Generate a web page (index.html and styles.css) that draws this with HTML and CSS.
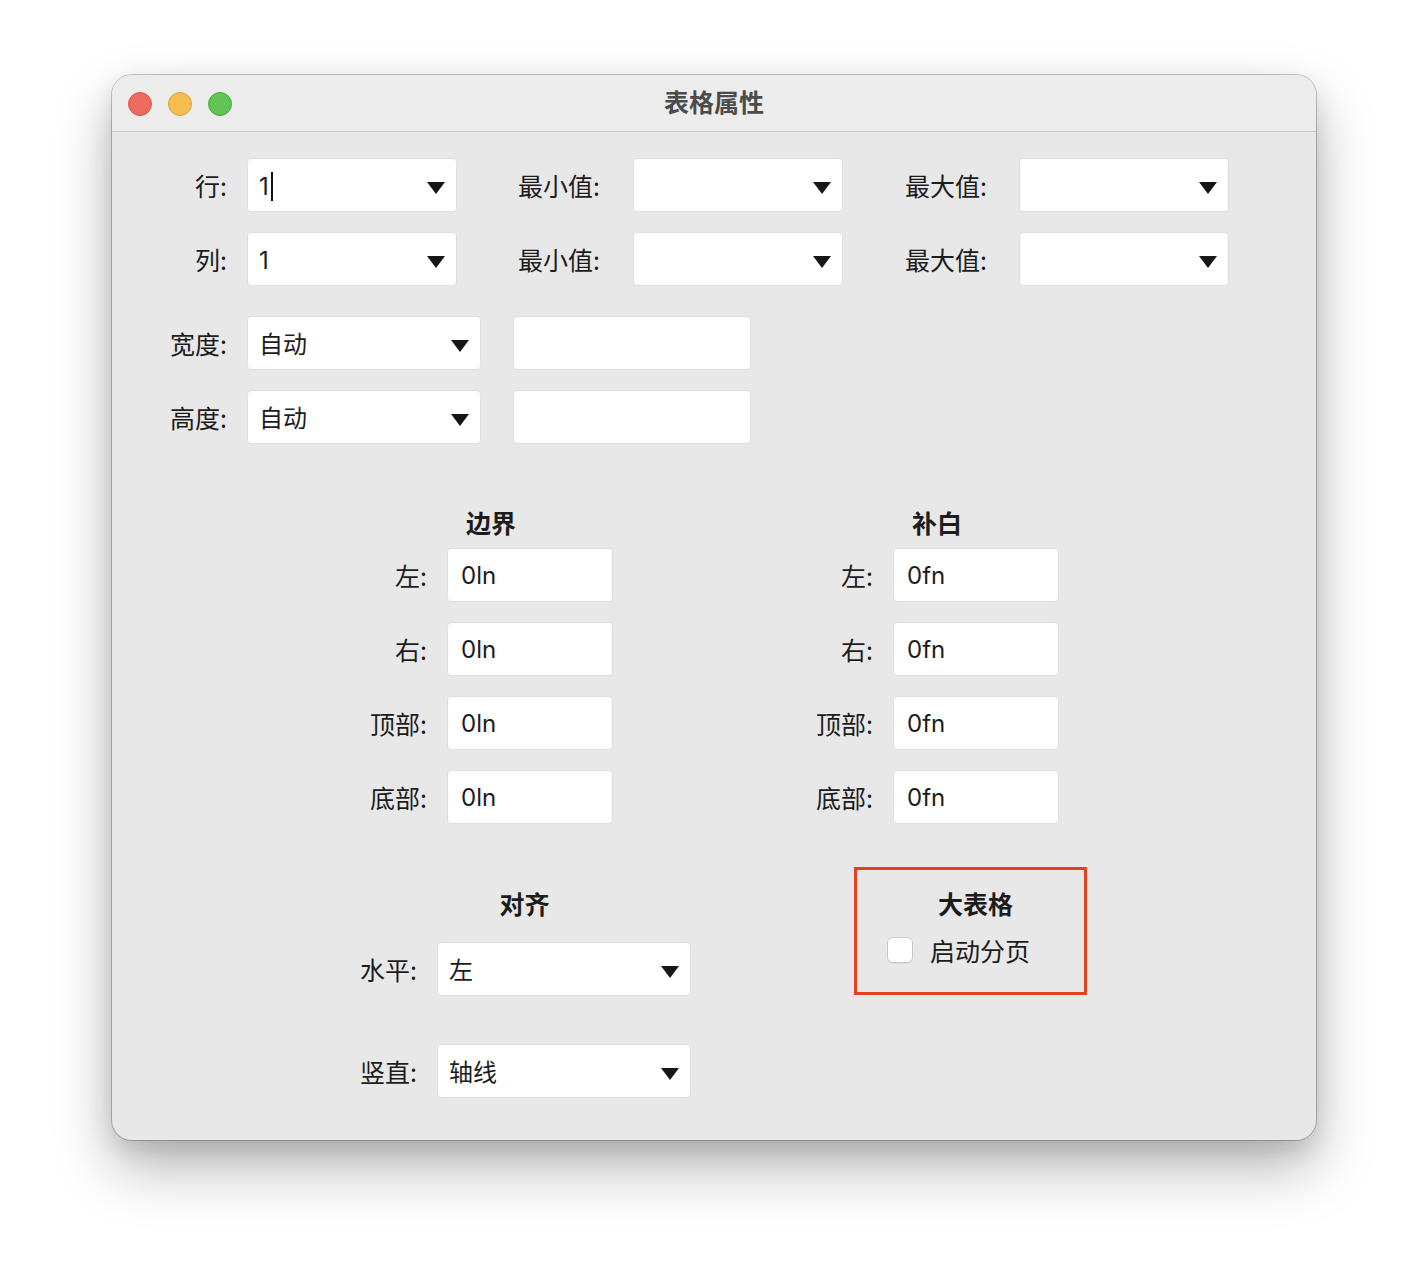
FILE: index.html
```html
<!DOCTYPE html>
<html lang="zh">
<head>
<meta charset="utf-8">
<title>表格属性</title>
<link rel="stylesheet" href="styles.css">
</head>
<body>
<div class="window">
  <div class="titlebar">
    <div class="lights">
      <span class="light red"></span>
      <span class="light yellow"></span>
      <span class="light green"></span>
    </div>
    <div class="title">表格属性</div>
  </div>
  <div class="content">
    <div class="rows">
      <div class="row">
        <div class="lbl1">行:</div>
        <div class="combo w210"><span class="val">1<span class="caret"></span></span><span class="arrow"></span></div>
        <div class="lbl2">最小值:</div>
        <div class="combo w210"><span class="val"></span><span class="arrow"></span></div>
        <div class="lbl3">最大值:</div>
        <div class="combo w210"><span class="val"></span><span class="arrow"></span></div>
      </div>
      <div class="row">
        <div class="lbl1">列:</div>
        <div class="combo w210"><span class="val">1</span><span class="arrow"></span></div>
        <div class="lbl2">最小值:</div>
        <div class="combo w210"><span class="val"></span><span class="arrow"></span></div>
        <div class="lbl3">最大值:</div>
        <div class="combo w210"><span class="val"></span><span class="arrow"></span></div>
      </div>
    </div>
    <div class="rows size-rows">
      <div class="row">
        <div class="lbl1">宽度:</div>
        <div class="combo w234"><span class="val">自动</span><span class="arrow"></span></div>
        <div class="field w238"></div>
      </div>
      <div class="row">
        <div class="lbl1">高度:</div>
        <div class="combo w234"><span class="val">自动</span><span class="arrow"></span></div>
        <div class="field w238"></div>
      </div>
    </div>
    <div class="sections">
      <div class="group margins">
        <div class="ghead">边界</div>
        <div class="glbl">左:</div><div class="field w166">0ln</div>
        <div class="glbl">右:</div><div class="field w166">0ln</div>
        <div class="glbl">顶部:</div><div class="field w166">0ln</div>
        <div class="glbl">底部:</div><div class="field w166">0ln</div>
      </div>
      <div class="group paddings">
        <div class="ghead">补白</div>
        <div class="glbl">左:</div><div class="field w166">0fn</div>
        <div class="glbl">右:</div><div class="field w166">0fn</div>
        <div class="glbl">顶部:</div><div class="field w166">0fn</div>
        <div class="glbl">底部:</div><div class="field w166">0fn</div>
      </div>
    </div>
    <div class="sections2">
      <div class="group align">
        <div class="ghead">对齐</div>
        <div class="glbl">水平:</div><div class="combo w254"><span class="val">左</span><span class="arrow"></span></div>
        <div class="glbl">竖直:</div><div class="combo w254"><span class="val">轴线</span><span class="arrow"></span></div>
      </div>
      <div class="bigtable">
        <div class="bhead">大表格</div>
        <label class="check"><span class="box"></span><span>启动分页</span></label>
      </div>
    </div>
  </div>
</div>
</body>
</html>
```
FILE: styles.css
```css
* { box-sizing: border-box; }
html, body { margin: 0; padding: 0; background: #ffffff; }
body {
  width: 1428px;
  height: 1288px;
  overflow: hidden;
  font-family: "Inter", "Noto Sans CJK SC", sans-serif;
  color: #1c1c1c;
  font-size: 24px;
}
.window {
  position: relative;
  margin-left: 112px;
  margin-top: 75px;
  width: 1204px;
  height: 1065px;
  border-radius: 20px;
  background: #e8e8e8;
  box-shadow: 0 0 0 1px rgba(0,0,0,0.22), 0 28px 60px rgba(0,0,0,0.28), 0 10px 24px rgba(0,0,0,0.12);
  overflow: hidden;
}
.titlebar {
  height: 57px;
  background: #ececec;
  border-bottom: 1px solid #cacaca;
  display: flex;
  align-items: center;
  position: relative;
}
.lights { display: flex; gap: 16px; padding-left: 16px; padding-top: 2px; }
.light {
  width: 24px; height: 24px; border-radius: 50%;
  display: block;
}
.red { background: #ee6a5f; border: 1px solid #d4564c; }
.yellow { background: #f5be4f; border: 1px solid #d9a13f; }
.green { background: #61c454; border: 1px solid #4ca73f; }
.title {
  position: absolute;
  left: 0; right: 0; top: 0; bottom: 4px;
  display: flex; align-items: center; justify-content: center;
  font-family: "Noto Sans CJK SC", sans-serif;
  font-weight: 700;
  font-size: 25px;
  color: #4b4b4b;
  pointer-events: none;
}
.content { padding-top: 26px; }
.rows { display: flex; flex-direction: column; gap: 20px; }
.size-rows { margin-top: 30px; }
.row { display: flex; align-items: center; height: 54px; }
.lbl1, .lbl2, .lbl3, .glbl, .ghead, .bhead, .check {
  font-family: "Noto Sans CJK SC", sans-serif;
  font-size: 25px;
  line-height: 25px;
}
.lbl1 { width: 115px; margin-right: 20px; text-align: right; }
.lbl2 { width: 115px; margin-left: 61px; }
.lbl3 { width: 114px; margin-left: 62px; }
.combo, .field {
  height: 54px;
  background: #ffffff;
  border: 1px solid #dedede;
  border-radius: 4px;
  display: flex;
  align-items: center;
  padding-left: 11px;
  font-size: 24px;
  line-height: 24px;
  font-family: "Inter", "Noto Sans CJK SC", sans-serif;
  color: #1c1c1c;
  padding-top: 2px;
}
.field { padding-left: 13px; }
.combo { justify-content: space-between; padding-right: 11px; padding-top: 0; }
.val { display: flex; align-items: center; font-family: "Inter", "Noto Sans CJK SC", sans-serif; padding-top: 3px; }
.caret {
  display: inline-block;
  width: 2px; height: 29px;
  background: #111;
  margin-left: 2px;
}
.arrow {
  width: 0; height: 0;
  border-left: 9px solid transparent;
  border-right: 9px solid transparent;
  border-top: 12px solid #161616;
  margin-top: 6px;
}
.w210 { width: 210px; }
.w234 { width: 234px; }
.w238 { width: 238px; margin-left: 32px; }
.w166 { width: 166px; }
.w254 { width: 254px; }
.sections { display: flex; margin-top: 66px; align-items: flex-start; }
.group {
  display: grid;
  grid-template-columns: 58px 166px;
  column-gap: 20px;
  row-gap: 20px;
  align-items: center;
}
.ghead {
  grid-column: 1 / 3;
  text-align: center;
  font-weight: 700;
  margin-bottom: -7px;
}
.glbl { text-align: right; white-space: nowrap; }
.margins { margin-left: 257px; }
.paddings { margin-left: 202px; }
.sections2 { display: flex; margin-top: 43px; align-items: flex-start; }
.align {
  margin-left: 246px;
  padding-top: 24px;
  grid-template-columns: 59px 254px;
  row-gap: 48px;
}
.align .ghead { margin-bottom: -22px; }
.bigtable {
  margin-left: 163px;
  width: 233px;
  height: 128px;
  border: 3px solid #e5411f;
  padding-top: 21px;
  padding-left: 30px;
}
.bhead {
  text-align: center;
  font-weight: 700;
  padding-right: 20px;
}
.check {
  display: flex;
  align-items: center;
  gap: 17px;
  margin-top: 20px;
  height: 28px;
}
.box {
  width: 26px; height: 26px;
  background: #ffffff;
  border: 1px solid #c9c9c9;
  border-radius: 6px;
  box-shadow: 0 1px 1px rgba(0,0,0,0.05);
}
```
